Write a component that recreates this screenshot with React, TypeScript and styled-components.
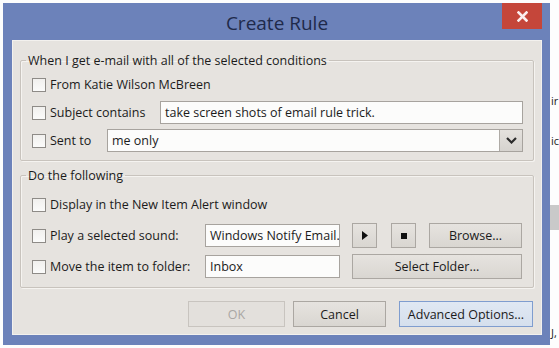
import styled, { createGlobalStyle } from 'styled-components';

const GlobalStyle = createGlobalStyle`
  html, body {
    margin: 0;
    padding: 0;
    background: #fdfdfd;
  }
  body {
    font-family: "Open Sans", "Noto Sans", sans-serif;
    font-size: 12.5px;
    color: #1b1b1b;
  }
  #root {
    width: 559px;
    height: 348px;
    overflow: hidden;
  }
`;

const Desktop = styled.div`
  display: flex;
  width: 559px;
  height: 348px;
  background: #fdfdfd;
  overflow: hidden;
`;

const LeftStrip = styled.div`
  flex: none;
  width: 3px;
`;

const RightStrip = styled.div`
  flex: 1;
  display: flex;
  flex-direction: column;
  overflow: hidden;
  padding-top: 94px;
  font-size: 11px;
  color: #222;
  white-space: nowrap;
`;

const Fragment = styled.div<{ $top: number }>`
  margin-top: ${(p) => p.$top}px;
  line-height: 14px;
  margin-left: 1px;
`;

const Band = styled.div<{ $top: number }>`
  margin-top: ${(p) => p.$top}px;
  height: 25px;
  background: #c9c9c9;
`;

const Window = styled.div`
  flex: none;
  display: flex;
  flex-direction: column;
  box-sizing: border-box;
  width: 547px;
  height: 342px;
  margin-top: 3px;
  padding: 0 8px 10px 9px;
  background: #6c82ba;
`;

const TitleBar = styled.div`
  display: grid;
  grid-template-columns: 40px 1fr 40px;
  height: 37px;
  flex: none;
`;

const Title = styled.div`
  grid-column: 2;
  align-self: center;
  text-align: center;
  font-size: 19px;
  color: #1f2a4a;
  padding-top: 2px;
`;

const CloseButton = styled.div`
  grid-column: 3;
  align-self: start;
  height: 26px;
  background: #c5463a;
  display: flex;
  align-items: center;
  justify-content: center;
`;

const Client = styled.div`
  flex: 1;
  display: flex;
  flex-direction: column;
  box-sizing: border-box;
  background: #e6e3df;
  border: 1px solid #f3f1ee;
  padding: 11px 7px 0 7px;
`;

const Group = styled.fieldset<{ $gap?: number }>`
  margin: ${(p) => p.$gap ?? 0}px 0 0 0;
  padding: 0;
  border: 1px solid #c8c3bd;
  border-radius: 2px;
  box-shadow: inset 1px 1px 0 #f5f3f0, 1px 1px 0 #f5f3f0;
`;

const Legend = styled.legend`
  margin-left: 5px;
  padding: 0 2px;
  line-height: 17px;
`;

const GroupBody = styled.div<{ $top: number; $bottom: number; $gap: number }>`
  display: flex;
  flex-direction: column;
  gap: ${(p) => p.$gap}px;
  padding: ${(p) => p.$top}px 10px ${(p) => p.$bottom}px 11px;
`;

const Row = styled.div`
  display: flex;
  align-items: center;
  height: 23px;
`;

const CheckLabel = styled.label<{ $w?: number }>`
  display: flex;
  align-items: center;
  gap: 4px;
  flex: none;
  width: ${(p) => (p.$w ? `${p.$w}px` : 'auto')};
  white-space: nowrap;
`;

const Box = styled.span`
  display: inline-block;
  box-sizing: border-box;
  width: 14px;
  height: 14px;
  border: 1px solid #8e8b87;
  background: linear-gradient(#f1f0ee, #fbfbfa);
`;

const TextBox = styled.div<{ $w?: number }>`
  box-sizing: border-box;
  height: 23px;
  flex: ${(p) => (p.$w ? 'none' : '1')};
  width: ${(p) => (p.$w ? `${p.$w}px` : 'auto')};
  border: 1px solid #a7a39e;
  background: #fcfcfb;
  padding: 0 4px;
  line-height: 21px;
  white-space: nowrap;
  overflow: hidden;
`;

const Combo = styled.div`
  flex: 1;
  display: flex;
  box-sizing: border-box;
  height: 23px;
  border: 1px solid #a7a39e;
  background: #fcfcfb;
`;

const ComboText = styled.div`
  flex: 1;
  padding: 0 4px;
  line-height: 21px;
`;

const ComboButton = styled.div`
  width: 22px;
  flex: none;
  display: flex;
  align-items: center;
  justify-content: center;
  background: linear-gradient(#e4e1dd, #d6d3cf);
  border-left: 1px solid #aeaaa5;
`;

const Button = styled.div<{ $w: number; $ml?: number; $h?: number; $variant?: 'primary' | 'disabled' }>`
  flex: none;
  box-sizing: border-box;
  width: ${(p) => p.$w}px;
  height: ${(p) => p.$h ?? 25}px;
  margin-left: ${(p) => p.$ml ?? 0}px;
  display: flex;
  align-items: center;
  justify-content: center;
  border: 1px solid
    ${(p) => (p.$variant === 'primary' ? '#7f9dcf' : p.$variant === 'disabled' ? '#c8c4bf' : '#aba7a2')};
  background: ${(p) =>
    p.$variant === 'primary'
      ? 'linear-gradient(#e0e8f3, #d5dfed)'
      : p.$variant === 'disabled'
        ? '#e3e0dc'
        : 'linear-gradient(#e6e3df, #d9d6d1)'};
  color: ${(p) => (p.$variant === 'disabled' ? '#a9a7a4' : '#1b1b1b')};
  white-space: nowrap;
`;

const ButtonRow = styled.div`
  display: flex;
  justify-content: flex-end;
  margin-top: 13px;
  padding-right: 1px;
  gap: 8px;
`;

const Stop = styled.span`
  width: 6px;
  height: 6px;
  background: #111;
`;

const Chevron = () => (
  <svg width="11" height="7" viewBox="0 0 11 7">
    <polyline points="1,1 5.5,5.5 10,1" fill="none" stroke="#2b2b2b" strokeWidth="2.2" />
  </svg>
);

const PlayIcon = () => (
  <svg width="6" height="9" viewBox="0 0 6 9">
    <polygon points="0,0 6,4.5 0,9" fill="#111" />
  </svg>
);

const CloseIcon = () => (
  <svg width="11" height="11" viewBox="0 0 11 11">
    <path d="M1.5 1.5 L9.5 9.5 M9.5 1.5 L1.5 9.5" stroke="#fbeeee" strokeWidth="2.6" strokeLinecap="square" />
  </svg>
);

export default function App() {
  return (
    <>
      <GlobalStyle />
      <Desktop>
        <LeftStrip />
        <Window>
          <TitleBar>
            <Title>Create Rule</Title>
            <CloseButton>
              <CloseIcon />
            </CloseButton>
          </TitleBar>
          <Client>
            <Group>
              <Legend>When I get e-mail with all of the selected conditions</Legend>
              <GroupBody $top={4} $bottom={8} $gap={5}>
                <Row>
                  <CheckLabel>
                    <Box />
                    From Katie Wilson McBreen
                  </CheckLabel>
                </Row>
                <Row>
                  <CheckLabel $w={128}>
                    <Box />
                    Subject contains
                  </CheckLabel>
                  <TextBox>take screen shots of email rule trick.</TextBox>
                </Row>
                <Row>
                  <CheckLabel $w={75}>
                    <Box />
                    Sent to
                  </CheckLabel>
                  <Combo>
                    <ComboText>me only</ComboText>
                    <ComboButton>
                      <Chevron />
                    </ComboButton>
                  </Combo>
                </Row>
              </GroupBody>
            </Group>
            <Group $gap={6}>
              <Legend>Do the following</Legend>
              <GroupBody $top={9} $bottom={9} $gap={8}>
                <Row>
                  <CheckLabel>
                    <Box />
                    Display in the New Item Alert window
                  </CheckLabel>
                </Row>
                <Row>
                  <CheckLabel $w={173}>
                    <Box />
                    Play a selected sound:
                  </CheckLabel>
                  <TextBox $w={135}>Windows Notify Email.</TextBox>
                  <Button $w={25} $ml={12}>
                    <PlayIcon />
                  </Button>
                  <Button $w={25} $ml={14}>
                    <Stop />
                  </Button>
                  <Button $w={93} $ml={13}>
                    Browse...
                  </Button>
                </Row>
                <Row>
                  <CheckLabel $w={173}>
                    <Box />
                    Move the item to folder:
                  </CheckLabel>
                  <TextBox $w={135}>Inbox</TextBox>
                  <Button $w={170} $ml={12}>
                    Select Folder...
                  </Button>
                </Row>
              </GroupBody>
            </Group>
            <ButtonRow>
              <Button $w={97} $h={26} $variant="disabled">
                OK
              </Button>
              <Button $w={93} $h={26}>
                Cancel
              </Button>
              <Button $w={134} $h={26} $ml={5} $variant="primary">
                Advanced Options...
              </Button>
            </ButtonRow>
          </Client>
        </Window>
        <RightStrip>
          <Fragment $top={0}>ir</Fragment>
          <Fragment $top={26}>ic</Fragment>
          <Band $top={57} />
          <Fragment $top={96}>J,</Fragment>
        </RightStrip>
      </Desktop>
    </>
  );
}
